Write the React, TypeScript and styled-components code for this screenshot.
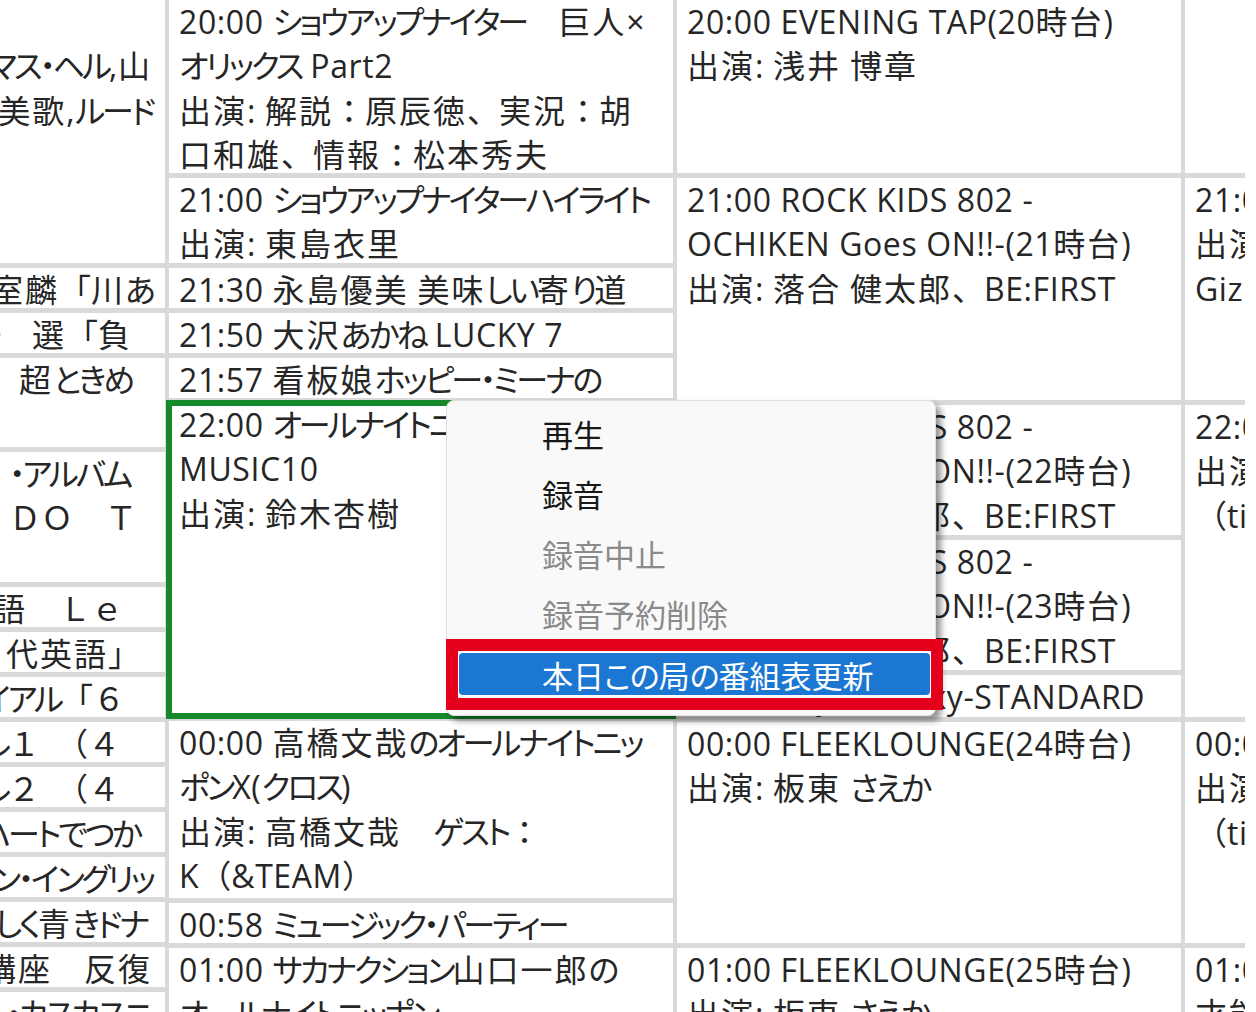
import React from 'react';
import styled, { createGlobalStyle } from 'styled-components';

const FONT = `"Open Sans", "Noto Sans CJK JP", sans-serif`;

const Global = createGlobalStyle`
  html, body { margin: 0; padding: 0; background: #fff; }
  body { font-family: ${FONT}; }
`;

const Page = styled.div`
  position: relative;
  width: 1245px;
  height: 1012px;
  overflow: hidden;
  background: #fff;
`;

const Grid = styled.div`
  display: grid;
  grid-template-columns: 165px 504px 504px 60px;
  column-gap: 4px;
  background: #d9d9d9;
  height: 1012px;
`;

const Column = styled.div`
  display: flex;
  flex-direction: column;
  gap: 5px;
  min-width: 0;
`;

const Cell = styled.div<{ $h?: number }>`
  background: #fff;
  flex: ${p => (p.$h ? `0 0 ${p.$h}px` : '1 1 auto')};
  padding-left: 10px;
  overflow: hidden;
  box-sizing: border-box;
`;

const SelectedCell = styled(Cell)`
  outline: 6px solid #17892d;
  outline-offset: -3px;
  overflow: visible;
`;

const TailCell = styled.div<{ $h?: number }>`
  background: #fff;
  flex: ${p => (p.$h ? `0 0 ${p.$h}px` : '1 1 auto')};
  overflow: hidden;
`;

const Line = styled.div`
  font-family: ${FONT};
  font-size: 32px;
  line-height: 44.3px;
  height: 44.3px;
  white-space: nowrap;
  color: #262626;
`;

const TailLine = styled(Line)<{ $pr: number }>`
  display: flex;
  justify-content: flex-end;
  padding-right: ${p => p.$pr}px;
`;

/* script runs: the original UI font has condensed kana, full-width punctuation and wide kanji */
const KanaRun = styled.span<{ $ls: number }>`
  font-feature-settings: "palt";
  letter-spacing: ${p => p.$ls}px;
`;
const KanjiRun = styled.span<{ $ls: number }>`
  letter-spacing: ${p => p.$ls}px;
`;
const WideRun = styled.span`
  font-feature-settings: normal;
`;
const LatinRun = styled.span<{ $ls: number }>`
  letter-spacing: ${p => p.$ls}px;
`;

type Kind = 'kana' | 'kanji' | 'wide' | 'latin';
const kindOf = (ch: string): Kind => {
  const c = ch.codePointAt(0) || 0;
  if (c >= 0x3040 && c <= 0x30ff) return 'kana';
  if ((c >= 0x4e00 && c <= 0x9fff) || c === 0x3005) return 'kanji';
  if ((c >= 0x3000 && c <= 0x303f) || (c >= 0xff00 && c <= 0xffef)) return 'wide';
  return 'latin';
};

type Sp = { kana: number; kanji: number; latin: number };
const GRID_SP: Sp = { kana: -3, kanji: 2, latin: 0.6 };
const MENU_SP: Sp = { kana: -1, kanji: 0, latin: 0 };

function Txt({ s, sp }: { s: string; sp: Sp }) {
  const runs: { k: Kind; t: string }[] = [];
  for (const ch of Array.from(s)) {
    const k = kindOf(ch);
    const last = runs[runs.length - 1];
    if (last && last.k === k) last.t += ch;
    else runs.push({ k, t: ch });
  }
  return (
    <>
      {runs.map((r, i) => {
        if (r.k === 'kana') return <KanaRun key={i} $ls={sp.kana}>{r.t}</KanaRun>;
        if (r.k === 'kanji') return <KanjiRun key={i} $ls={sp.kanji}>{r.t}</KanjiRun>;
        if (r.k === 'wide') return <WideRun key={i}>{r.t}</WideRun>;
        return <LatinRun key={i} $ls={sp.latin}>{r.t}</LatinRun>;
      })}
    </>
  );
}

const Menu = styled.div`
  position: absolute;
  left: 446px;
  top: 400px;
  width: 490px;
  height: 316px;
  box-sizing: border-box;
  padding-top: 2px;
  background: #f9f9f9;
  border: 1px solid #e0e0e0;
  border-radius: 8px;
  box-shadow: 5px 5px 6px rgba(0, 0, 0, 0.42);
  font-family: ${FONT};
`;

const MenuItem = styled.div<{ $disabled?: boolean }>`
  height: 60px;
  display: flex;
  align-items: center;
  padding-left: 95px;
  font-size: 31px;
  color: ${p => (p.$disabled ? '#8a8a8a' : '#181818')};
  white-space: nowrap;
`;

const ActiveSlot = styled.div`
  height: 60px;
  box-sizing: border-box;
  padding: 10px 5px 8px 12px;
`;

const ActiveItem = styled.div`
  height: 100%;
  box-sizing: border-box;
  background: #1c77d2;
  border-radius: 4px;
  box-shadow: 0 0 0 1px #ffffff;
  display: flex;
  align-items: center;
  padding-left: 83px;
  color: #fff;
  font-size: 31px;
  white-space: nowrap;
`;

const Annotation = styled.div`
  position: absolute;
  left: -1px;
  top: 238px;
  width: 497px;
  height: 71px;
  box-sizing: border-box;
  border: 12px solid #e4001b;
  pointer-events: none;
`;

type C = { h?: number; lines: string[] };
type T = { h?: number; lines: [string, number][] };

const col1: T[] = [
  { h: 263, lines: [['', 0], ['クリスマス・ヘル,山', 13], ['優田美歌,ルード', 12]] },
  { h: 40, lines: [['室麟「川あ', 12]] },
  { h: 40, lines: [['ー　選「負', 33]] },
  { h: 89, lines: [['超ときめ', 33]] },
  { h: 130, lines: [['・アルバム', 35], ['ＤＯ　Ｔ', 28]] },
  { h: 40, lines: [['語　Ｌｅ', 42]] },
  { h: 40, lines: [['代英語」', 25]] },
  { h: 40, lines: [['イアル「６', 40]] },
  { h: 40, lines: [['ル１　（４', 45]] },
  { h: 40, lines: [['ル２　（４', 45]] },
  { h: 40, lines: [['ハートでつか', 25]] },
  { h: 40, lines: [['ン・イングリッ', 12]] },
  { h: 40, lines: [['しく青きドナ', 18]] },
  { h: 40, lines: [['講座　反復', 13]] },
  { lines: [['・カスカスニ', 15]] },
];

const col2: C[] = [
  { h: 173, lines: ['20:00 ショウアップナイター　巨人×', 'オリックス Part2', '出演: 解説：原辰徳、実況：胡', '口和雄、情報：松本秀夫'] },
  { h: 85, lines: ['21:00 ショウアップナイターハイライト', '出演: 東島衣里'] },
  { h: 40, lines: ['21:30 永島優美 美味しい寄り道'] },
  { h: 40, lines: ['21:50 大沢あかね LUCKY 7'] },
  { h: 40, lines: ['21:57 看板娘ホッピー・ミーナの'] },
];
const selected: C = { h: 313, lines: ['22:00 オールナイトニッポン', 'MUSIC10', '出演: 鈴木杏樹'] };
const col2b: C[] = [
  { h: 177, lines: ['00:00 高橋文哉のオールナイトニッ', 'ポンX(クロス)', '出演: 高橋文哉　ゲスト：', 'K（&TEAM）'] },
  { h: 40, lines: ['00:58 ミュージック・パーティー'] },
  { lines: ['01:00 サカナクション山口一郎の', 'オールナイトニッポン'] },
];

const col3: C[] = [
  { h: 173, lines: ['20:00 EVENING TAP(20時台)', '出演: 浅井 博章'] },
  { h: 222, lines: ['21:00 ROCK KIDS 802 -', 'OCHIKEN Goes ON!!-(21時台)', '出演: 落合 健太郎、BE:FIRST'] },
  { h: 130, lines: ['22:00 ROCK KIDS 802 -', 'OCHIKEN Goes ON!!-(22時台)', '出演: 落合 健太郎、BE:FIRST'] },
  { h: 130, lines: ['23:00 ROCK KIDS 802 -', 'OCHIKEN Goes ON!!-(23時台)', '出演: 落合 健太郎、BE:FIRST'] },
  { h: 42, lines: ['23:57 Skye Galaxy-STANDARD'] },
  { h: 221, lines: ['00:00 FLEEKLOUNGE(24時台)', '出演: 板東 さえか'] },
  { lines: ['01:00 FLEEKLOUNGE(25時台)', '出演: 板東 さえか'] },
];

const col4: C[] = [
  { h: 173, lines: [] },
  { h: 222, lines: ['21:00 GROOVE', '出演: 大抜卓人', 'Gizmo'] },
  { h: 312, lines: ['22:00 ROCK', '出演: 中島', '（tiny）'] },
  { h: 221, lines: ['00:00 NIGHT', '出演: 中島', '（tiny）'] },
  { lines: ['01:00 MUSIC', '才能'] },
];

const renderCells = (cells: C[], prefix: string) =>
  cells.map((c, i) => (
    <Cell key={prefix + i} $h={c.h}>
      {c.lines.map((l, j) => (
        <Line key={j}>
          <Txt s={l} sp={GRID_SP} />
        </Line>
      ))}
    </Cell>
  ));

export default function App() {
  return (
    <Page>
      <Global />
      <Grid>
        <Column>
          {col1.map((c, i) => (
            <TailCell key={i} $h={c.h}>
              {c.lines.map(([t, pr], j) => (
                <TailLine key={j} $pr={pr}>
                  <span>
                    <Txt s={t} sp={GRID_SP} />
                  </span>
                </TailLine>
              ))}
            </TailCell>
          ))}
        </Column>
        <Column>
          {renderCells(col2, 'a')}
          <SelectedCell $h={selected.h}>
            {selected.lines.map((l, j) => (
              <Line key={j}>
                <Txt s={l} sp={GRID_SP} />
              </Line>
            ))}
          </SelectedCell>
          {renderCells(col2b, 'b')}
        </Column>
        <Column>{renderCells(col3, 'c')}</Column>
        <Column>{renderCells(col4, 'd')}</Column>
      </Grid>
      <Menu>
        <MenuItem><Txt s="再生" sp={MENU_SP} /></MenuItem>
        <MenuItem><Txt s="録音" sp={MENU_SP} /></MenuItem>
        <MenuItem $disabled><Txt s="録音中止" sp={MENU_SP} /></MenuItem>
        <MenuItem $disabled><Txt s="録音予約削除" sp={MENU_SP} /></MenuItem>
        <ActiveSlot>
          <ActiveItem><Txt s="本日この局の番組表更新" sp={MENU_SP} /></ActiveItem>
        </ActiveSlot>
        <Annotation />
      </Menu>
    </Page>
  );
}
